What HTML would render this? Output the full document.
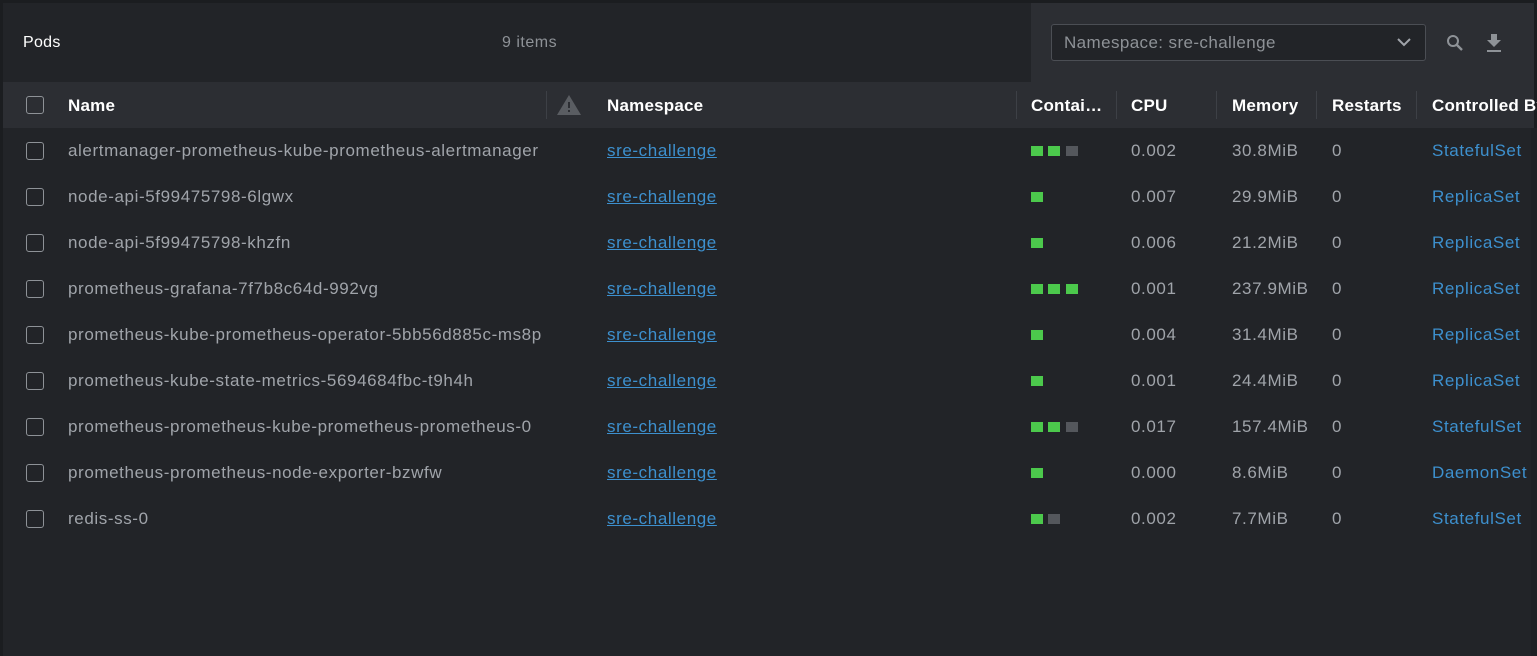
<!DOCTYPE html>
<html><head><meta charset="utf-8"><style>
*{margin:0;padding:0;box-sizing:border-box}
html,body{width:1537px;height:656px;overflow:hidden;background:#1b1d20;font-family:"Liberation Sans",sans-serif}
#app{position:absolute;left:3px;top:3px;width:1531px;height:653px;background:#222428}
.top{position:absolute;left:0;top:0;width:1531px;height:79px;background:#222428}
.tr{position:absolute;left:1028px;top:0;width:503px;height:79px;background:#2c2e33}
.title{position:absolute;left:20px;top:31px;font-size:16px;color:#fff;letter-spacing:0.3px}
.items{position:absolute;left:499px;top:31px;font-size:16px;color:#8e9297;letter-spacing:0.5px}
.sel{position:absolute;left:1048px;top:21px;width:375px;height:37px;border:1px solid #4b4e54;border-radius:3px;background:#222428;color:#8e9297;font-size:17px;letter-spacing:0.4px;padding:8px 12px}
.sel svg{position:absolute;right:14px;top:13px}
.thead{position:absolute;left:0;top:79px;width:1531px;height:46px;background:#2c2e33}
.th{position:absolute;top:14px;font-size:17px;color:#fff;font-weight:bold;white-space:nowrap;letter-spacing:0.2px}
.sep{position:absolute;top:9px;width:1px;height:28px;background:#3d4046}
.cb{position:absolute;left:23px;width:18px;height:18px;border:1px solid #8e9297;border-radius:3px}
.row{position:absolute;left:0;width:1531px;height:46px}
.td{position:absolute;top:16px;font-size:17px;letter-spacing:0.6px;color:#a0a4aa;white-space:nowrap}
.ln{color:#3d90ce;text-decoration:underline}
.bl{color:#3d90ce}
.sq{position:absolute;top:21px;width:12px;height:10px}
.g{background:#4cc94c}.d{background:#54575c}
.row .cb{top:17px}
</style></head><body><div id="app">
<div class="top"></div><div class="tr"></div>
<div class="title">Pods</div><div class="items">9 items</div>
<div class="sel">Namespace: sre-challenge<svg width="14" height="9" viewBox="0 0 14 9"><path d="M1 1l6 6 6-6" stroke="#a0a4aa" stroke-width="2" fill="none"/></svg></div>
<svg style="position:absolute;left:1443px;top:31px" width="18" height="18" viewBox="0 0 18 18"><circle cx="7" cy="7" r="5" stroke="#8e9297" stroke-width="2" fill="none"/><path d="M11 11l5 5" stroke="#8e9297" stroke-width="2.4"/></svg>
<svg style="position:absolute;left:1482px;top:30px" width="18" height="20" viewBox="0 0 18 20"><path d="M6 1h6v6h4l-7 7-7-7h4z" fill="#8e9297"/><rect x="2" y="17" width="14" height="2" fill="#8e9297"/></svg>
<div class="thead">
<div class="cb" style="top:14px"></div>
<div class="th" style="left:65px">Name</div>
<div class="sep" style="left:543px"></div>
<svg style="position:absolute;left:554px;top:13px" width="24" height="20" viewBox="0 0 24 20"><path d="M12 0L24 20H0z" fill="#5a5d62"/><rect x="11" y="7" width="2" height="6" fill="#2c2e33"/><rect x="11" y="15" width="2" height="2" fill="#2c2e33"/></svg>
<div class="th" style="left:604px">Namespace</div>
<div class="sep" style="left:1013px"></div>
<div class="th" style="left:1028px">Contai…</div>
<div class="sep" style="left:1113px"></div>
<div class="th" style="left:1128px">CPU</div>
<div class="sep" style="left:1213px"></div>
<div class="th" style="left:1229px">Memory</div>
<div class="sep" style="left:1313px"></div>
<div class="th" style="left:1329px">Restarts</div>
<div class="sep" style="left:1413px"></div>
<div class="th" style="left:1429px">Controlled By</div>
</div>
</div>
<div style="position:absolute;left:3px;top:125px">
<div class="row" style="top:0"><div class="cb"></div><div class="td" style="left:65px">alertmanager-prometheus-kube-prometheus-alertmanager</div><div class="td ln" style="left:604px">sre-challenge</div><div class="sq g" style="left:1028px"></div><div class="sq g" style="left:1045px"></div><div class="sq d" style="left:1063px"></div><div class="td" style="left:1128px">0.002</div><div class="td" style="left:1229px">30.8MiB</div><div class="td" style="left:1329px">0</div><div class="td bl" style="left:1429px">StatefulSet</div></div>
<div class="row" style="top:46px"><div class="cb"></div><div class="td" style="left:65px">node-api-5f99475798-6lgwx</div><div class="td ln" style="left:604px">sre-challenge</div><div class="sq g" style="left:1028px"></div><div class="td" style="left:1128px">0.007</div><div class="td" style="left:1229px">29.9MiB</div><div class="td" style="left:1329px">0</div><div class="td bl" style="left:1429px">ReplicaSet</div></div>
<div class="row" style="top:92px"><div class="cb"></div><div class="td" style="left:65px">node-api-5f99475798-khzfn</div><div class="td ln" style="left:604px">sre-challenge</div><div class="sq g" style="left:1028px"></div><div class="td" style="left:1128px">0.006</div><div class="td" style="left:1229px">21.2MiB</div><div class="td" style="left:1329px">0</div><div class="td bl" style="left:1429px">ReplicaSet</div></div>
<div class="row" style="top:138px"><div class="cb"></div><div class="td" style="left:65px">prometheus-grafana-7f7b8c64d-992vg</div><div class="td ln" style="left:604px">sre-challenge</div><div class="sq g" style="left:1028px"></div><div class="sq g" style="left:1045px"></div><div class="sq g" style="left:1063px"></div><div class="td" style="left:1128px">0.001</div><div class="td" style="left:1229px">237.9MiB</div><div class="td" style="left:1329px">0</div><div class="td bl" style="left:1429px">ReplicaSet</div></div>
<div class="row" style="top:184px"><div class="cb"></div><div class="td" style="left:65px">prometheus-kube-prometheus-operator-5bb56d885c-ms8p</div><div class="td ln" style="left:604px">sre-challenge</div><div class="sq g" style="left:1028px"></div><div class="td" style="left:1128px">0.004</div><div class="td" style="left:1229px">31.4MiB</div><div class="td" style="left:1329px">0</div><div class="td bl" style="left:1429px">ReplicaSet</div></div>
<div class="row" style="top:230px"><div class="cb"></div><div class="td" style="left:65px">prometheus-kube-state-metrics-5694684fbc-t9h4h</div><div class="td ln" style="left:604px">sre-challenge</div><div class="sq g" style="left:1028px"></div><div class="td" style="left:1128px">0.001</div><div class="td" style="left:1229px">24.4MiB</div><div class="td" style="left:1329px">0</div><div class="td bl" style="left:1429px">ReplicaSet</div></div>
<div class="row" style="top:276px"><div class="cb"></div><div class="td" style="left:65px">prometheus-prometheus-kube-prometheus-prometheus-0</div><div class="td ln" style="left:604px">sre-challenge</div><div class="sq g" style="left:1028px"></div><div class="sq g" style="left:1045px"></div><div class="sq d" style="left:1063px"></div><div class="td" style="left:1128px">0.017</div><div class="td" style="left:1229px">157.4MiB</div><div class="td" style="left:1329px">0</div><div class="td bl" style="left:1429px">StatefulSet</div></div>
<div class="row" style="top:322px"><div class="cb"></div><div class="td" style="left:65px">prometheus-prometheus-node-exporter-bzwfw</div><div class="td ln" style="left:604px">sre-challenge</div><div class="sq g" style="left:1028px"></div><div class="td" style="left:1128px">0.000</div><div class="td" style="left:1229px">8.6MiB</div><div class="td" style="left:1329px">0</div><div class="td bl" style="left:1429px">DaemonSet</div></div>
<div class="row" style="top:368px"><div class="cb"></div><div class="td" style="left:65px">redis-ss-0</div><div class="td ln" style="left:604px">sre-challenge</div><div class="sq g" style="left:1028px"></div><div class="sq d" style="left:1045px"></div><div class="td" style="left:1128px">0.002</div><div class="td" style="left:1229px">7.7MiB</div><div class="td" style="left:1329px">0</div><div class="td bl" style="left:1429px">StatefulSet</div></div>
</div>
<div style="position:absolute;left:1531px;top:128px;width:6px;height:528px;background:#1f2125"></div>
</body></html>
